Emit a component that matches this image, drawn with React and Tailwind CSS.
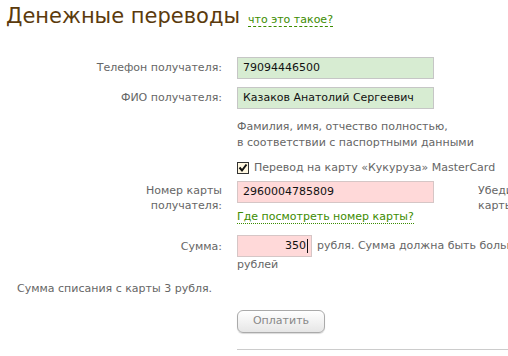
export default function App() {
  const font = { fontFamily: '"DejaVu Sans", Verdana, sans-serif' };
  return (
    <div className="w-[508px] h-[356px] overflow-hidden bg-white text-[11px] text-[#666]" style={font}>
      <div className="flex items-baseline pt-[2px] pl-[6px]">
        <h1 className="text-[21px] leading-[28px] text-[#5b3a0c] font-normal">Денежные переводы</h1>
        <a className="ml-[8px] text-[11px] text-[#3c8c00] border-b border-dashed border-[#3c8c00] leading-[13px]">что это такое?</a>
      </div>

      <div className="mt-[27px] flex flex-col w-[600px]">
        <div className="flex items-center h-[22px]">
          <div className="w-[222px] shrink-0 text-right">Телефон получателя:</div>
          <div className="ml-[15px] shrink-0 w-[197px] h-[22px] bg-[#d7ecd2] border border-[#c6c6c6] px-[5px] flex items-center text-[#111]">79094446500</div>
        </div>
        <div className="flex items-center h-[22px] mt-[8px]">
          <div className="w-[222px] shrink-0 text-right">ФИО получателя:</div>
          <div className="ml-[15px] shrink-0 w-[197px] h-[22px] bg-[#d7ecd2] border border-[#c6c6c6] px-[5px] flex items-center text-[#111]">Казаков Анатолий Сергеевич</div>
        </div>
        <div className="ml-[237px] mt-[10px] leading-[16px]">
          <div>Фамилия, имя, отчество полностью,</div>
          <div>в соответствии с паспортными данными</div>
        </div>
        <div className="ml-[237px] mt-[9px] flex items-center h-[16px]">
          <div className="w-[12px] h-[12px] border border-[#333] bg-[#fff7e0] flex items-center justify-center">
            <svg width="10" height="10" viewBox="0 0 10 10"><path d="M1.5 4.5 L4 7.5 L8.5 1.5" stroke="#111" strokeWidth="2" fill="none" /></svg>
          </div>
          <span className="ml-[5px]">Перевод на карту «Кукуруза» MasterCard</span>
        </div>
        <div className="flex mt-[5px]">
          <div className="w-[222px] shrink-0 text-right leading-[15px] pt-[2px]">
            <div>Номер карты</div>
            <div>получателя:</div>
          </div>
          <div className="ml-[15px] shrink-0 flex flex-col">
            <div className="w-[197px] h-[22px] bg-[#ffd9d9] border border-[#d6c6c6] px-[5px] flex items-center text-[#111]">2960004785809</div>
            <a className="mt-[7px] self-start text-[#3c8c00] border-b border-dotted border-[#3c8c00] leading-[13px]">Где посмотреть номер карты?</a>
          </div>
          <div className="ml-[44px] shrink-0 leading-[15px] pt-[2px] whitespace-nowrap">
            <div>Убедитесь, что</div>
            <div>карты</div>
          </div>
        </div>
        <div className="flex mt-[11px]">
          <div className="w-[222px] shrink-0 text-right pt-[4px]">Сумма:</div>
          <div className="ml-[15px] shrink-0 w-[340px] leading-[14px]">
            <div className="flex items-center whitespace-nowrap">
              <div className="w-[75px] shrink-0 h-[22px] bg-[#ffd9d9] border border-[#d6c6c6] px-[3px] flex items-center justify-end text-[#111]">350<span className="w-px h-[14px] bg-[#111] ml-px"></span></div>
              <span className="ml-[5px]">рубля. Сумма должна быть больше 10</span>
            </div>
            <div className="mt-[1px]">рублей</div>
          </div>
        </div>
        <div className="ml-[17px] mt-[9px]">Сумма списания с карты 3 рубля.</div>
        <div className="ml-[237px] mt-[12px]">
          <button className="w-[88px] h-[23px] rounded-[6px] border border-[#aaa] bg-gradient-to-b from-white to-[#e6e6e6] text-[#888] text-[11px] shadow-[0_1px_1px_rgba(0,0,0,0.15)]" style={font}>Оплатить</button>
        </div>
        <div className="ml-[237px] mt-[16px] h-px bg-[#ccc]"></div>
      </div>
    </div>
  );
}
